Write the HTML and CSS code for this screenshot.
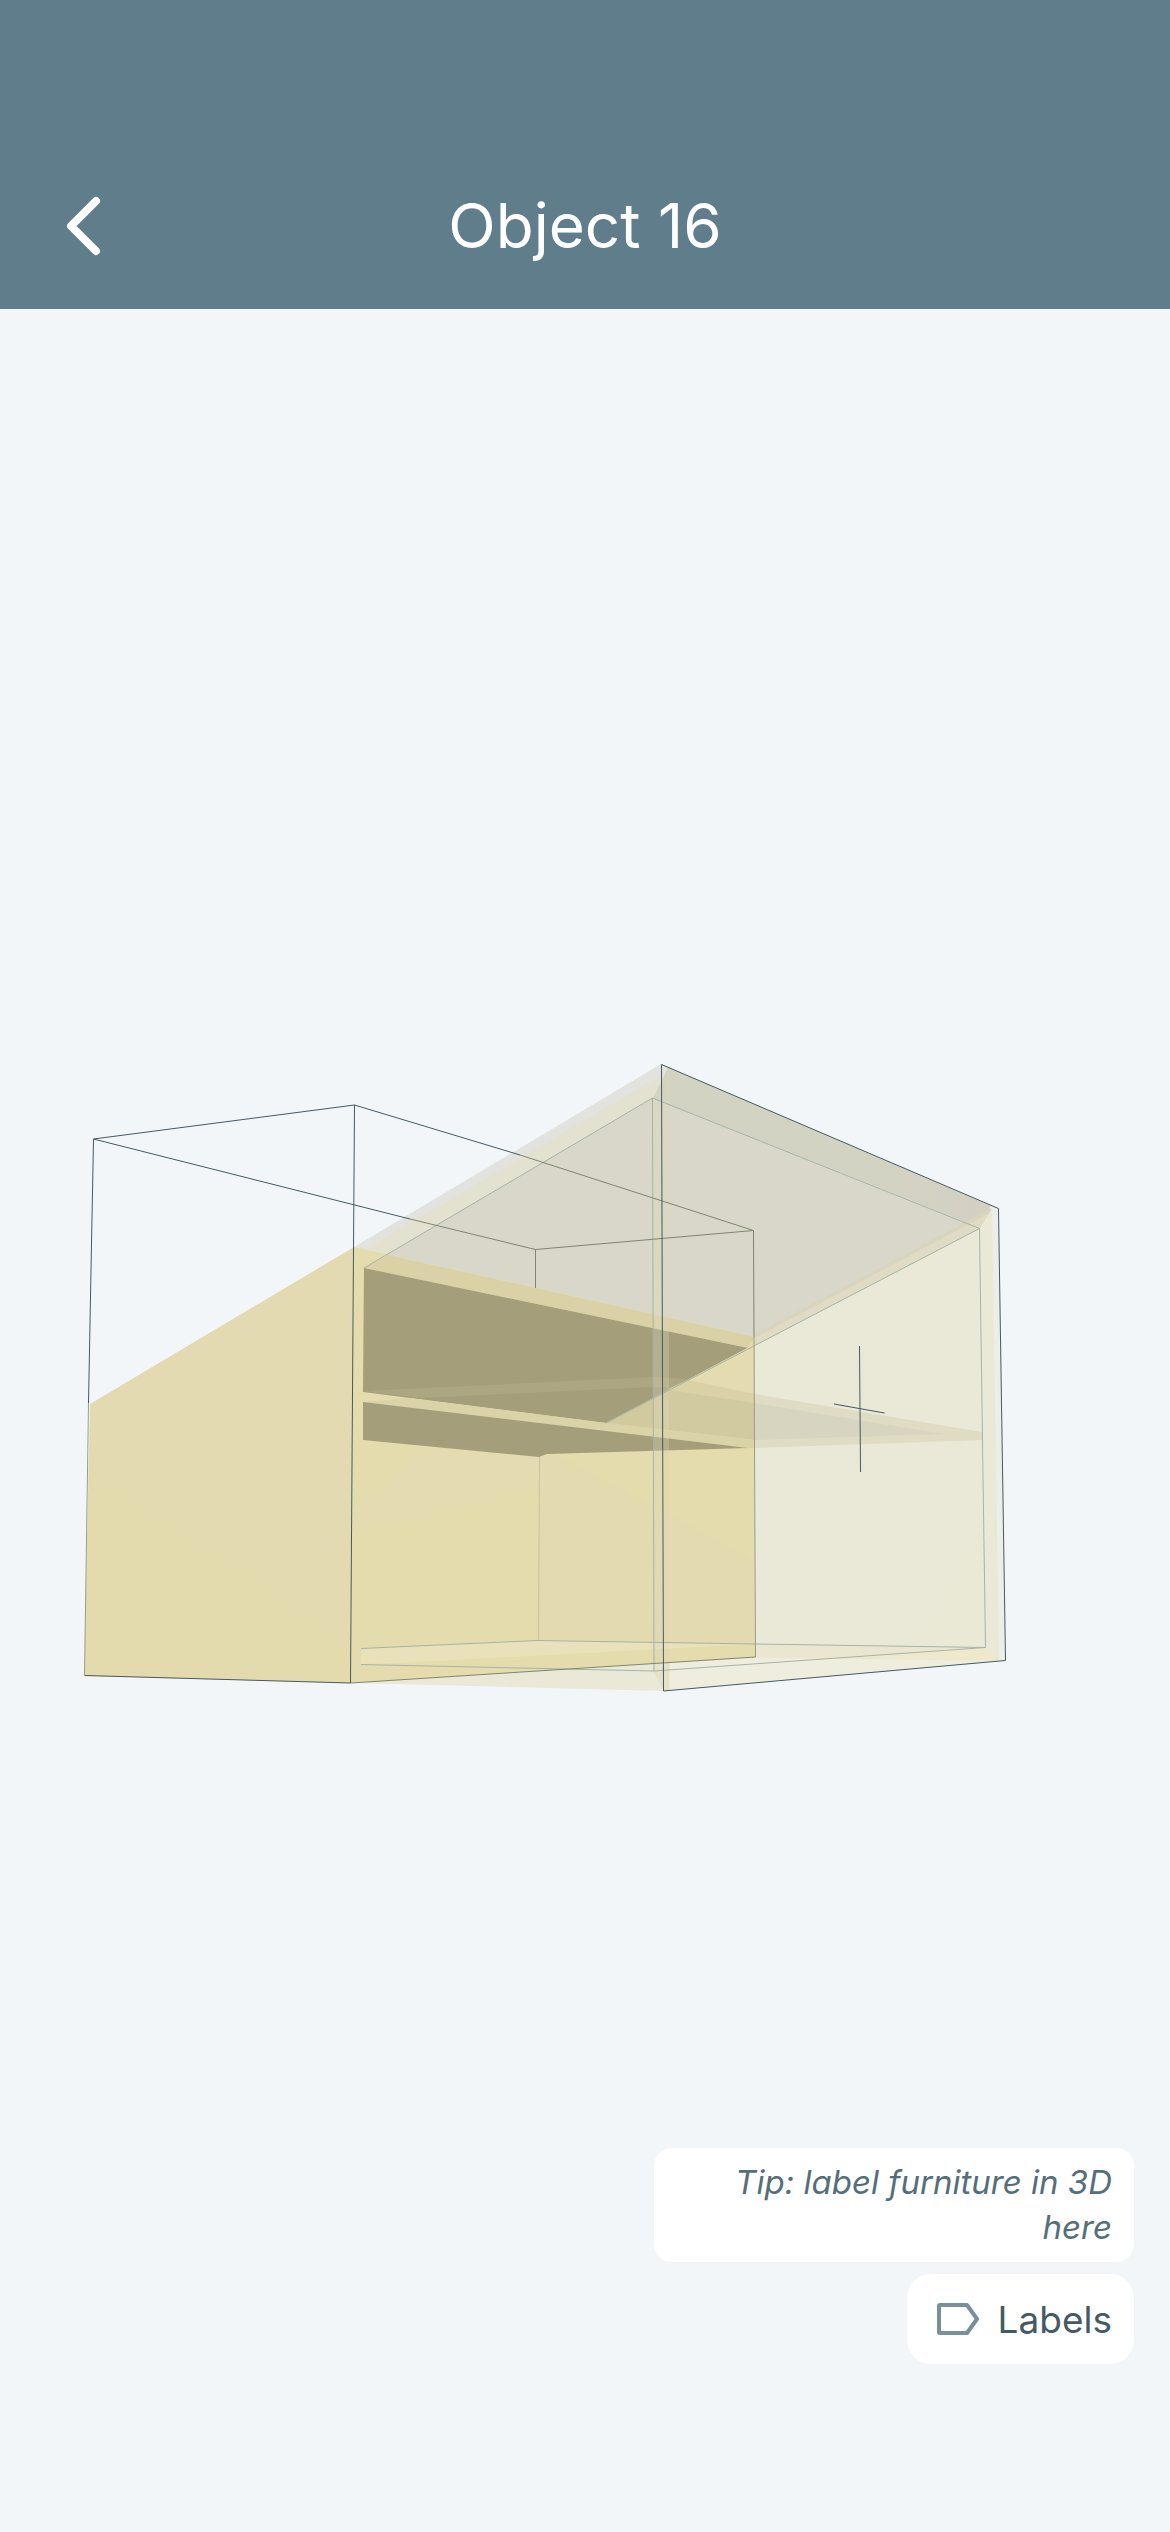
FILE: index.html
```html
<!DOCTYPE html>
<html lang="en">
<head>
    <meta charset="UTF-8">
    <meta name="viewport" content="width=device-width, initial-scale=1.0">
    <title>Object 16</title>
    <link rel="stylesheet" href="styles.css">
</head>
<body>

<header>
    <a class="back" href="#" aria-label="Back">
        <svg width="38" height="64" viewBox="0 0 38 64">
            <path d="M32 7 L7 32 L32 57"/>
        </svg>
    </a>
    <h1>Object 16</h1>
</header>

<main class="viewer">
    <!-- 3D view -->
    <svg class="scene" viewBox="0 309 1170 2223" role="img" aria-label="3D view of the object">
        <defs>
            <linearGradient id="side" x1="0.7" y1="0" x2="0.3" y2="1">
                <stop offset="0.5" stop-color="#e3dab1"/>
                <stop offset="0.8" stop-color="#e3dbad"/>
            </linearGradient>
            <linearGradient id="wall" x1="0" y1="0" x2="1" y2="1">
                <stop offset="0.6" stop-color="#eae8d6"/>
                <stop offset="1" stop-color="#e9e9d6"/>
            </linearGradient>
            <linearGradient id="rim" x1="0" y1="0" x2="1" y2="0">
                <stop offset="0.6" stop-color="#d2d3c3"/>
                <stop offset="1" stop-color="#d4d0c3"/>
            </linearGradient>
        </defs>

        <!-- glass body -->
        <polygon fill="#e2e3de" points="354,1247 661,1064 672,1068 661,1110 364,1268"/>
        <polygon fill="#e3e1cf" points="366,1249 663,1074 668,1070 653,1098 364,1268"/>
        <polygon fill="#d9d7c9" points="364,1268 653,1098 980,1228 755,1348 388,1255"/>
        <polygon fill="url(#rim)" points="661,1064 999,1209 992,1208 980,1228 653,1098 668,1068"/>
        <polygon fill="#eceee8" points="990,1206 999,1209 1006,1661 990,1662"/>
        <polygon fill="url(#wall)" points="755,1345 980,1228 986,1647 755,1660"/>
        <polygon fill="#eae8d6" points="980,1228 992,1208 999,1661 986,1647"/>
        <polygon fill="#d9d4be" points="755,1334 992,1208 980,1228 755,1345"/>
        <polygon fill="#dfdbc4" points="755,1338 988,1214 980,1228 755,1345"/>
        <polygon fill="#eae9d8" points="350,1683 755,1656 986,1647 999,1661 664,1691"/>
        <polygon fill="#ebe6cf" points="755,1644 986,1647 998,1660 755,1658"/>
        <polygon fill="#eee9cd" points="986,1647 999,1661 890,1658 830,1658"/>
        <polygon fill="#efeddd" points="670,1663 755,1658 998,1661 670,1690"/>
        <polygon fill="#ebe6cc" points="653,1671 670,1663 670,1690 664,1691"/>

        <!-- solid body -->
        <polygon fill="url(#side)" points="354,1247 90,1404 84,1676 350,1683"/>
        <polygon fill="#e4dcad" points="354,1247 755,1337 755,1657 350,1683"/>
        <polygon fill="#e4dbb0" points="420,1446 539,1457 539,1490 353,1536 353,1510"/>
        <polygon fill="#e3dab0" points="560,1456 755,1560 755,1644 538,1640 539,1457"/>
        <polygon fill="#dad2a6" points="388,1255 755,1337 748,1348 364,1268"/>
        <polygon fill="#a49e7b" points="364,1268 748,1348 606,1423 363,1392"/>
        <polygon fill="#aca683" points="363,1391 653,1377 690,1379 672,1388 653,1387 420,1398"/>
        <polygon fill="#e4dcb0" points="755,1344 755,1448 680,1440 606,1423"/>
        <polygon fill="#dad2a6" points="688,1380 755,1394 755,1403 675,1392 668,1389"/>
        <polygon fill="#d2ca9f" points="669,1390 755,1403 755,1440 606,1423"/>
        <polygon fill="#dad3a7" points="410,1398 606,1423 755,1440 755,1448 748,1448 363,1402"/>
        <polygon fill="#a49e7b" points="363,1402 748,1448 547,1454 539,1457 363,1440"/>
        <polygon fill="#e8e1b9" points="361,1648 537,1640 755,1644 400,1663 361,1664"/>

        <!-- shelf behind the glass -->
        <polygon fill="#e0dcc4" points="755,1394 982,1432 982,1440 755,1448"/>
        <polygon fill="#d7d5bf" points="755,1403 944,1434 755,1440"/>

        <!-- door edge -->
        <polygon fill="#ded8b7" fill-opacity="0.3" points="653,1098 669,1068 669,1690 664,1691 653,1671"/>

        <g class="edge-soft">
            <path d="M364 1268 L652.5 1098 L979.5 1228.5 L985.5 1647.5"/>
            <path d="M606 1423 L979.5 1228.5"/>
            <path d="M652.5 1098 L654 1671"/>
            <path d="M985.5 1647.5 L654 1671 L361 1664.5"/>
            <path d="M985.5 1647.5 L755 1644 L537 1640.5 L361 1648.5"/>
        </g>
        <path class="edge-faint" d="M539.5 1457 L538.5 1640"/>
        <g class="edge-olive">
            <path d="M520 1155 L753.5 1230.5 L535.5 1249.5 L410 1219"/>
            <path d="M535.5 1249.5 L535.5 1288"/>
            <path d="M753.5 1230.5 L754 1337"/>
            <path d="M350.5 1683 L755.5 1657"/>
        </g>
        <path class="edge-mid" d="M754 1337 L755.5 1657"/>
        <g class="edge">
            <path d="M410 1219 L93.5 1139 L354.5 1105 L520 1155"/>
            <path d="M93.5 1139 L88.5 1403"/>
            <path d="M354.5 1105 L350.5 1683 L84.5 1675.5"/>
            <path d="M661.5 1064.5 L998.5 1208.5 L1005.5 1660.5 L663.5 1691 Z"/>
            <path d="M859.5 1346 L860.5 1472 M834 1404 L884.5 1413"/>
        </g>
        <path class="edge-mid" d="M88.5 1403 L84.5 1675.5"/>
    </svg>

    <div class="actions">
        <p class="tip">Tip: label furniture in 3D here</p>
        <button class="labels" type="button">
            <svg width="44" height="34" viewBox="0 0 44 34">
                <path d="M4 3 H31 L41 17 L31 31 H4 Q3 31 3 30 V4 Q3 3 4 3 Z"/>
            </svg>
            Labels
        </button>
    </div>
</main>

</body>
</html>
```
FILE: styles.css
```css
* {
    margin: 0;
    padding: 0;
    box-sizing: border-box;
}

body {
    font-family: 'Inter', sans-serif;
    background-color: #f2f6f9;
    color: #455a64;
    min-height: 100vh;
    display: flex;
    flex-direction: column;
}

header {
    display: grid;
    grid-template-columns: 102px 1fr 102px;
    align-items: center;
    background-color: #607d8b;
    color: #fff;
    padding: 186px 0 43px;
}

.back {
    display: flex;
    justify-content: flex-end;
}

.back path {
    fill: none;
    stroke: #fff;
    stroke-width: 8;
    stroke-linecap: round;
    stroke-linejoin: round;
}

header h1 {
    font-size: 62px;
    line-height: 80px;
    font-weight: 400;
    text-align: center;
}

.viewer {
    position: relative;
    flex: 1;
}

.scene {
    display: block;
    width: 100%;
}

.scene path {
    fill: none;
    stroke-width: 1;
}

.edge {
    stroke: #455a64;
}

.edge-mid {
    stroke: #9a9f87;
}

.edge-olive {
    stroke: #7f8570;
}

.edge-soft {
    stroke: #a6b3a9;
}

.edge-faint {
    stroke: #c5c4a3;
}

/* Floating controls over the scene */
.actions {
    position: absolute;
    right: 36px;
    bottom: 168px;
    display: flex;
    flex-direction: column;
    align-items: flex-end;
    gap: 12px;
}

.tip {
    max-width: 480px;
    padding: 12px 22px;
    background-color: #fff;
    border-radius: 18px;
    color: #546e7a;
    font-size: 33px;
    line-height: 45px;
    font-style: italic;
    text-align: right;
}

.labels {
    display: flex;
    align-items: center;
    gap: 18px;
    height: 90px;
    padding: 0 22px 0 29px;
    background-color: #fff;
    border: none;
    border-radius: 24px;
    color: #455a64;
    font-family: inherit;
    font-size: 37px;
    cursor: pointer;
}

.labels path {
    fill: none;
    stroke: #78909c;
    stroke-width: 4;
    stroke-linejoin: round;
}
```
